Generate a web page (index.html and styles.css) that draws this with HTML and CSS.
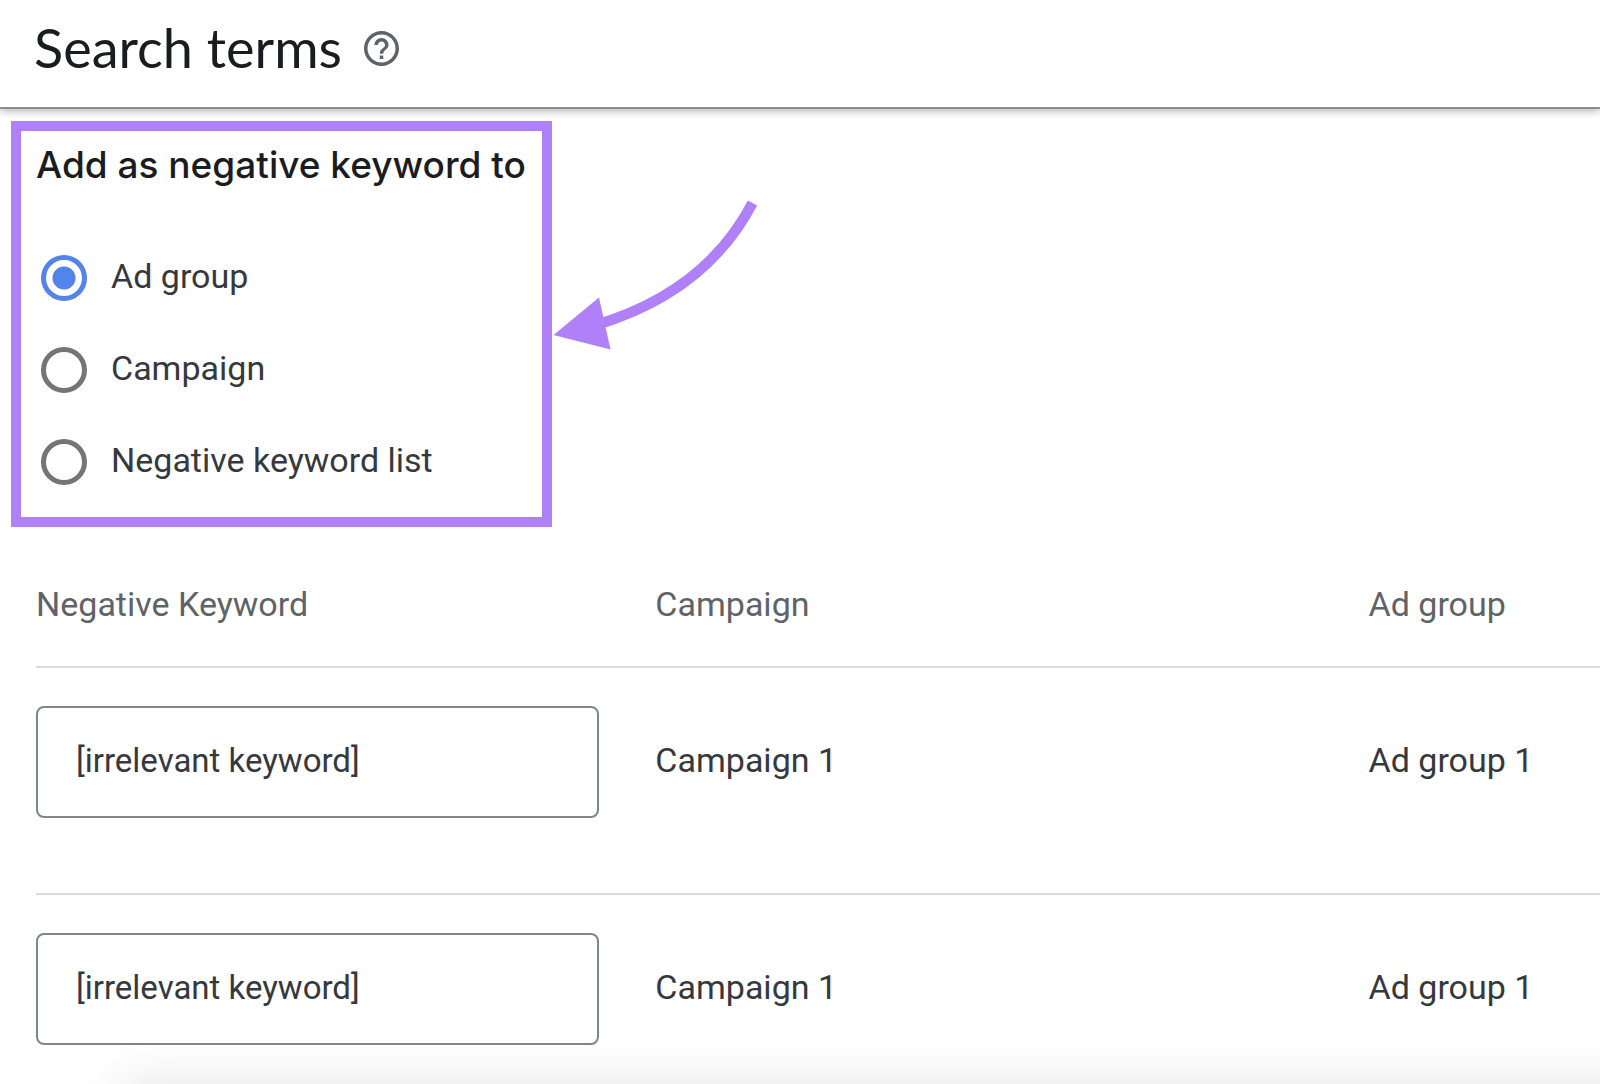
FILE: index.html
```html
<!DOCTYPE html>
<html lang="en">
<head>
<meta charset="utf-8">
<meta name="viewport" content="width=device-width, initial-scale=1">
<title>Search terms</title>
<link rel="stylesheet" href="styles.css">
</head>
<body>
<header class="page-header">
  <h1 class="page-title">Search terms</h1>
  <button class="help" type="button" aria-label="Help">
    <svg class="help-icon" viewBox="2 2 20 20" aria-hidden="true"><path fill="currentColor" d="M11 18h2v-2h-2v2zm1-16C6.48 2 2 6.48 2 12s4.48 10 10 10 10-4.480 10-10S17.520 2 12 2zm0 18c-4.410 0-8-3.590-8-8s3.590-8 8-8 8 3.590 8 8-3.590 8-8 8zm0-14c-2.210 0-4 1.790-4 4h2c0-1.100.9-2 2-2s2 .9 2 2c0 2-3 1.750-3 5h2c0-2.250 3-2.500 3-5 0-2.210-1.790-4-4-4z"/></svg>
  </button>
</header>
<main class="content">
  <fieldset class="target">
    <legend class="target-title">Add as negative keyword to</legend>
    <div class="options">
      <label class="option"><input class="radio" type="radio" name="target" checked><span class="option-text">Ad group</span></label>
      <label class="option"><input class="radio" type="radio" name="target"><span class="option-text">Campaign</span></label>
      <label class="option"><input class="radio" type="radio" name="target"><span class="option-text">Negative keyword list</span></label>
    </div>
    <svg class="arrow" viewBox="0 0 220 160" aria-hidden="true">
      <path d="M200.500 5Q154 94 44 127" fill="none" stroke="#af80f8" stroke-width="10.500"/>
      <path d="M1.500 137L47 99.500L58.500 151.500Z" fill="#af80f8"/>
    </svg>
  </fieldset>
  <table class="keywords">
    <thead>
      <tr><th class="col-keyword">Negative Keyword</th><th class="col-campaign">Campaign</th><th>Ad group</th></tr>
    </thead>
    <tbody>
      <tr><td><input class="keyword" type="text" aria-label="Negative keyword 1" value="[irrelevant keyword]"></td><td class="text-cell">Campaign 1</td><td class="text-cell">Ad group 1</td></tr>
      <tr><td><input class="keyword" type="text" aria-label="Negative keyword 2" value="[irrelevant keyword]"></td><td class="text-cell">Campaign 1</td><td class="text-cell">Ad group 1</td></tr>
    </tbody>
  </table>
</main>
<div class="bottom-shade"></div>
</body>
</html>
```

FILE: styles.css
```css
* {
  box-sizing: border-box;
}

body {
  margin: 0;
  overflow: hidden;
  background: #fff;
  color: #35393d;
  font: 34px/40px Roboto, "Liberation Sans", sans-serif;
}

.page-header {
  display: flex;
  align-items: center;
  gap: 22px;
  padding: 16px 34px 27px;
  border-bottom: 2px solid #8b8d91;
  box-shadow: 0 2px 8px rgba(0, 0, 0, 0.3);
}

.page-title {
  margin: 0;
  color: #1b1c20;
  font: 400 54px/64px Lato, sans-serif;
}

.help {
  display: flex;
  padding: 0;
  border: 0;
  background: none;
  color: #5f6368;
}

.help-icon {
  width: 35px;
  height: 35px;
}

.content {
  padding-top: 12px;
}

.target {
  position: relative;
  width: 541px;
  margin: 0 0 0 11px;
  padding: 10px 15px 32px;
  border: 10px solid #af80f8;
  background: #fff;
}

.target-title {
  float: left;
  width: 100%;
  padding: 0;
  color: #1b1c20;
  font: 500 37px/48px Inter, sans-serif;
  white-space: nowrap;
}

.options {
  display: flex;
  flex-direction: column;
  gap: 46px;
  clear: both;
  padding: 66px 0 0 5px;
}

.option {
  display: flex;
  align-items: center;
  gap: 24px;
  height: 46px;
}

.option-text {
  padding-bottom: 4px;
}

.radio {
  flex: none;
  appearance: none;
  width: 46px;
  height: 46px;
  margin: 0;
  border: 5px solid #757575;
  border-radius: 50%;
}

.radio:checked {
  border-color: #5284ec;
  background: radial-gradient(circle, #5284ec 11px, transparent 12px);
}

.arrow {
  position: absolute;
  top: 67px;
  left: calc(100% + 10px);
  width: 220px;
  height: 160px;
}

.keywords {
  width: calc(100% - 36px);
  margin: 57px 0 0 36px;
  border-collapse: collapse;
  table-layout: fixed;
  text-align: left;
}

.keywords th {
  padding: 0 0 42px;
  color: #5f6368;
  font-weight: 400;
}

.keywords td {
  padding: 38px 0 75px;
  border-top: 2px solid #dadce0;
}

.keywords .text-cell {
  padding-bottom: 79px;
}

.col-keyword {
  width: 39.600%;
}

.col-campaign {
  width: 45.600%;
}

.keyword {
  display: block;
  width: 563px;
  max-width: 100%;
  height: 112px;
  padding: 0 38px 4px;
  border: 2px solid #80868b;
  border-radius: 8px;
  background: #fff;
  color: inherit;
  font: inherit;
  font-size: 33px;
}

.bottom-shade {
  position: fixed;
  right: -100px;
  bottom: -40px;
  left: 120px;
  height: 40px;
  box-shadow: 0 0 50px rgba(0, 0, 0, 0.12);
}
```
